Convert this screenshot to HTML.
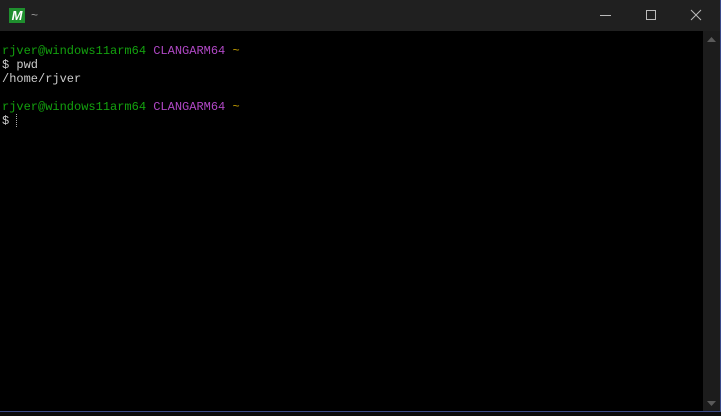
<!DOCTYPE html>
<html><head><meta charset="utf-8"><style>
html,body{margin:0;padding:0;width:721px;height:412px;overflow:hidden;background:#0c0c0c;}
.win{position:absolute;left:0;top:0;width:720px;height:411px;background:#000;border-right:1px solid #3a4a8a;border-bottom:1px solid #3a4a8a;}
.title{position:absolute;left:0;top:0;width:720px;height:31px;background:#202020;}
.logo{position:absolute;left:9px;top:8px;width:16px;height:15px;background:#1f8f2e;color:#fff;font:bold italic 13px "Liberation Sans",sans-serif;text-align:center;line-height:15px;}
.tt{position:absolute;left:31px;top:8px;color:#9a9a9a;font:12px "Liberation Sans",sans-serif;}
.sb{position:absolute;left:703px;top:31px;width:17px;height:380px;background:#1c1c1c;}
.term{position:absolute;left:2px;top:44px;font:12px/14px "Liberation Mono",monospace;color:#cccccc;white-space:pre;}
.g{color:#13a10e}.m{color:#b148c6}.y{color:#c19c00}
.cur{display:inline-block;width:1px;height:13px;border-left:1px dotted #aaa;vertical-align:-3px;}
</style></head><body>
<div class="win">
<div class="title">
<div class="logo">M</div><div class="tt">~</div>
<svg style="position:absolute;left:580px;top:0" width="141" height="31">
<line x1="20" y1="15.5" x2="31" y2="15.5" stroke="#bbb" stroke-width="1"/>
<rect x="66.5" y="10.5" width="9" height="9" fill="none" stroke="#bbb" stroke-width="1"/>
<path d="M111 10 L121 20 M121 10 L111 20" stroke="#bbb" stroke-width="1"/>
</svg>
</div>
<div class="sb">
<svg width="17" height="380"><path d="M4 11 L8.5 6 L13 11Z" fill="#5a5a5a"/><path d="M4 370 L8.5 375 L13 370Z" fill="#5a5a5a"/></svg>
</div>
<div class="term"><span class="g">rjver@windows11arm64</span> <span class="m">CLANGARM64</span> <span class="y">~</span>
$ pwd
/home/rjver

<span class="g">rjver@windows11arm64</span> <span class="m">CLANGARM64</span> <span class="y">~</span>
$ <span class="cur"></span></div>
</div>
</body></html>
